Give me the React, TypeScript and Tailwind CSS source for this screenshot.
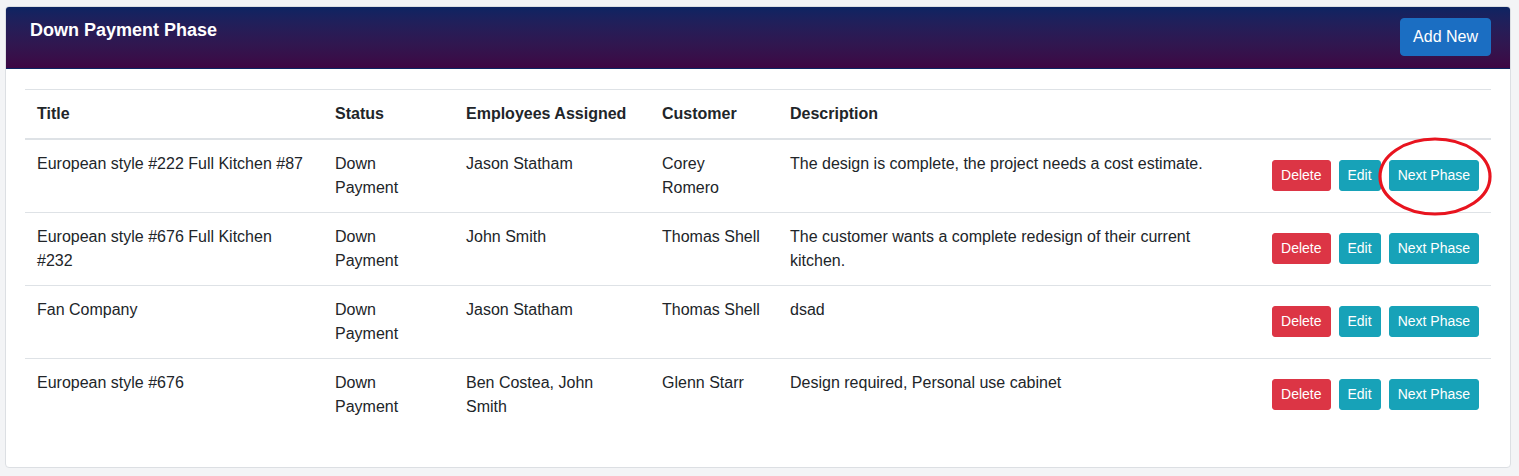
const rows = [
  {
    title: "European style #222 Full Kitchen #87",
    status: "Down Payment",
    employees: "Jason Statham",
    customer: "Corey Romero",
    description: "The design is complete, the project needs a cost estimate.",
    circled: true,
  },
  {
    title: "European style #676 Full Kitchen #232",
    status: "Down Payment",
    employees: "John Smith",
    customer: "Thomas Shell",
    description: "The customer wants a complete redesign of their current kitchen.",
  },
  {
    title: "Fan Company",
    status: "Down Payment",
    employees: "Jason Statham",
    customer: "Thomas Shell",
    description: "dsad",
  },
  {
    title: "European style #676",
    status: "Down Payment",
    employees: "Ben Costea, John Smith",
    customer: "Glenn Starr",
    description: "Design required, Personal use cabinet",
  },
];

const RowActions = ({ circled }: { circled?: boolean }) => (
  <div className="relative top-[-1px] flex justify-end gap-2">
    <button className="rounded-[3px] border border-[#dc3545] bg-[#dc3545] px-2 py-1 text-sm leading-[21px] text-white">
      Delete
    </button>
    <button className="rounded-[3px] border border-[#17a2b8] bg-[#17a2b8] px-2 py-1 text-sm leading-[21px] text-white">
      Edit
    </button>
    <button className="relative rounded-[3px] border border-[#17a2b8] bg-[#17a2b8] px-2 py-1 text-sm leading-[21px] text-white">
      Next Phase
      {circled && (
        // hand-drawn highlight around the button
        <svg className="pointer-events-none absolute left-[-12px] top-[-24px]" width="116" height="80" viewBox="0 0 116 80">
          <ellipse cx="57" cy="39.5" rx="55" ry="37.5" fill="none" stroke="#e8141f" strokeWidth="3.2" />
        </svg>
      )}
    </button>
  </div>
);

export default function App() {
  return (
    <div className="min-h-screen bg-[#f3f4f6] pl-[5px] pt-[6px] pr-[8px] font-['Liberation_Sans',Arial,sans-serif] text-[#212529]">
      <div className="overflow-hidden rounded-[4px] border border-[#dcdfe3] bg-white">
        <div className="flex h-[62px] items-start justify-between border-b border-[#0c2461] bg-gradient-to-b from-[#0c2462] to-[#3d0644] pl-[24px] pr-[19px] pt-[11px]">
          <h5 className="text-[18px] font-bold leading-6 text-white">Down Payment Phase</h5>
          <button className="h-[38px] rounded-[4px] border border-[#1b6ec2] bg-[#1b6ec2] px-3 text-base leading-6 text-white">
            Add New
          </button>
        </div>
        <div className="px-[19px] pt-5 pb-5">
          <table className="mb-4 w-full table-fixed border-collapse text-base leading-6">
            <thead>
              <tr className="border-t border-[#dee2e6] border-b-2">
                <th className="w-[298px] p-3 text-left font-bold">Title</th>
                <th className="w-[131px] p-3 text-left font-bold">Status</th>
                <th className="w-[196px] p-3 text-left font-bold">Employees Assigned</th>
                <th className="w-[128px] p-3 text-left font-bold">Customer</th>
                <th className="w-[482px] p-3 text-left font-bold">Description</th>
                <th className="w-[231px] p-3"></th>
              </tr>
            </thead>
            <tbody>
              {rows.map((r, i) => (
                <tr key={i} className="border-t border-[#dee2e6]">
                  <td className="p-3 align-top">{r.title}</td>
                  <td className="p-3 align-top">{r.status}</td>
                  <td className="p-3 align-top">{r.employees}</td>
                  <td className="p-3 align-top">{r.customer}</td>
                  <td className="p-3 align-top">{r.description}</td>
                  <td className="whitespace-nowrap p-3 align-middle">
                    <RowActions circled={r.circled} />
                  </td>
                </tr>
              ))}
            </tbody>
          </table>
        </div>
      </div>
    </div>
  );
}
